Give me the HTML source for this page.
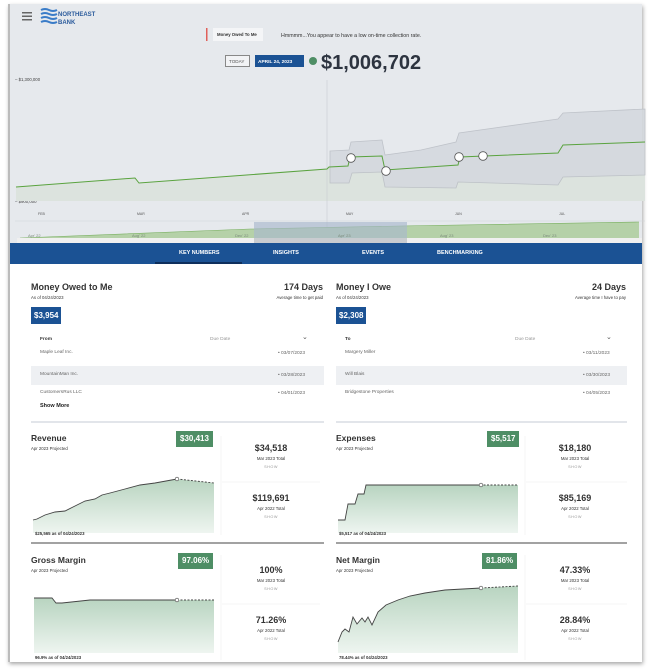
<!DOCTYPE html>
<html><head><meta charset="utf-8"><style>
*{margin:0;padding:0;box-sizing:border-box}
body{width:649px;height:671px;background:#fff;font-family:"Liberation Sans",sans-serif;position:relative;overflow:hidden;color:#333}
.a{position:absolute;white-space:nowrap}
.frame{position:absolute;left:8px;top:4px;width:634px;height:658px;background:#fff;box-shadow:1px 2px 4px rgba(0,0,0,.35);border-left:2px solid #bbb}
.top{position:absolute;left:10px;top:4px;width:632px;height:240px;background:#e6e9ed}
.nav{position:absolute;left:10px;top:243px;width:632px;height:21px;background:#1b5294}
.tab{position:absolute;top:250px;font-size:5.5px;font-weight:bold;color:#fff}
.h{font-size:9px;font-weight:bold;color:#333}
.s{font-size:4.3px;color:#333}
.blue{background:#1b5294;color:#fff;font-weight:bold;font-size:8px;padding:4px 3px;position:absolute}
.gbox{background:#4e8e65;color:#fff;font-weight:bold;font-size:8px;position:absolute;height:16px;line-height:16px;padding:0 4px}
.row{font-size:4.8px;color:#666}
.val{font-size:9px;font-weight:bold;color:#333;text-align:center;width:100px}
.sub{font-size:4.3px;color:#333;text-align:center;width:100px}
.show{font-size:3.8px;color:#999;text-align:center;width:100px;letter-spacing:.5px}
.ct{font-size:8.5px}
</style></head><body>
<div class="frame"></div>
<div class="top"></div>
<svg class="a" style="left:0;top:0" width="649" height="244" viewBox="0 0 649 244">
 <g fill="#666"><rect x="22" y="12" width="10" height="1.5"/><rect x="22" y="15.5" width="10" height="1.5"/><rect x="22" y="19" width="10" height="1.5"/></g>
 <g fill="none" stroke="#3a7cc8" stroke-width="2"><path d="M41 10q4-2 8 0t8 0"/><path d="M41 14q4-2 8 0t8 0"/><path d="M41 18q4-2 8 0t8 0"/><path d="M41 22q4-2 8 0t8 0"/></g>
 <text x="58" y="16" font-size="6" font-weight="bold" fill="#2b5b9c" font-family="Liberation Sans">NORTHEAST</text>
 <text x="58" y="24" font-size="6" font-weight="bold" fill="#2b5b9c" font-family="Liberation Sans">BANK</text>
 <rect x="206" y="28" width="1.5" height="13" fill="#e0605a"/>
 <rect x="213" y="28" width="50" height="13" fill="#f4f5f7"/>
 <text x="217" y="36" font-size="4.3" font-weight="bold" fill="#333" font-family="Liberation Sans">Money Owed To Me</text>
 <text x="281" y="37" font-size="5.3" fill="#333" font-family="Liberation Sans">Hmmmm...You appear to have a low on-time collection rate.</text>
 <rect x="225.5" y="55.5" width="24" height="11" fill="#f2f3f5" stroke="#888"/>
 <text x="229" y="63" font-size="4.6" fill="#555" font-family="Liberation Sans">TODAY</text>
 <rect x="255" y="55" width="49" height="12" fill="#1b5294"/>
 <text x="258" y="63" font-size="4.8" font-weight="bold" fill="#fff" font-family="Liberation Sans">APRIL 24, 2023</text>
 <circle cx="313" cy="61" r="4" fill="#4e8e65"/>
 <text x="321" y="69" font-size="20" font-weight="bold" fill="#2d3440" font-family="Liberation Sans">$1,006,702</text>
 <text x="15" y="81" font-size="4.3" fill="#444" font-family="Liberation Sans">–  $1,300,000</text>
 <text x="15" y="203" font-size="4.3" fill="#444" font-family="Liberation Sans">–  $900,000</text>
 <path d="M16 187L135 178L139 183L327 169L329 167L348 166L350 157L382 156L385 170L458 165L460 157L558 153L563 145L645 142L645 201L16 201Z" fill="#dce3de"/>
 <path d="M330 151L349 150L351 142L382 140L385 155L421 150L456 142L459 133L558 119L563 113L645 109L645 175L563 177L558 185L458 182L456 188L385 187L382 172L352 173L349 183L330 183Z" fill="#d4d8de" stroke="#b8bcc3" stroke-width=".8" opacity=".85"/>
 <line x1="327" y1="80" x2="327" y2="243" stroke="#c8ccd2" stroke-width=".6"/>
 <path d="M16 187L135 178L139 183L327 169L329 167L348 166L350 157L382 156L385 170L458 165L460 157L558 153L563 145L645 142" fill="none" stroke="#5aa33f" stroke-width="1"/>
 <g fill="#fff" stroke="#555" stroke-width=".8"><circle cx="351" cy="158" r="4.3"/><circle cx="386" cy="171" r="4.3"/><circle cx="459" cy="157" r="4.3"/><circle cx="483" cy="156" r="4.3"/></g>
 <g font-size="3.5" fill="#555" font-family="Liberation Sans"><text x="38" y="215">FEB</text><text x="137" y="215">MAR</text><text x="242" y="215">APR</text><text x="346" y="215">MAY</text><text x="455" y="215">JUN</text><text x="559" y="215">JUL</text></g>
 <line x1="15" y1="221" x2="645" y2="221" stroke="#d0d3d8" stroke-width=".5"/>
 <path d="M20 238L250 229L400 226L639 222L639 238Z" fill="#b5d1a8"/>
 <path d="M20 238L250 229L400 226L639 222" fill="none" stroke="#79b060" stroke-width=".6"/>
 <rect x="254" y="222" width="153" height="22" fill="#a9b8cc" opacity=".65"/>
 <g font-size="4" fill="#7a8a7a" font-family="Liberation Sans"><text x="28" y="237">Apr' 22</text><text x="132" y="237">Aug' 22</text><text x="235" y="237">Dec' 22</text><text x="338" y="237">Apr' 23</text><text x="440" y="237">Aug' 23</text><text x="543" y="237">Dec' 23</text></g>
 <rect x="17" y="238" width="625" height="5" fill="#f0f0f0"/>
 <rect x="254" y="238" width="153" height="5" fill="#c9ccd0"/>
</svg>
<div class="nav"></div>
<div class="a" style="left:155px;top:262px;width:87px;height:2px;background:#0e2f5c"></div>
<div class="tab a" style="left:179px">KEY NUMBERS</div>
<div class="tab a" style="left:273px">INSIGHTS</div>
<div class="tab a" style="left:362px">EVENTS</div>
<div class="tab a" style="left:437px">BENCHMARKING</div>

<div class="a h" style="left:31px;top:282px">Money Owed to Me</div>
<div class="a h" style="left:224px;top:282px;width:99px;text-align:right">174 Days</div>
<div class="a s" style="left:31px;top:295px">As of 04/24/2023</div>
<div class="a s" style="left:223px;top:295px;width:100px;text-align:right">Average time to get paid</div>
<div class="blue" style="left:31px;top:307px">$3,954</div>
<div class="a row" style="left:40px;top:337px;color:#333;font-weight:bold">From</div>
<div class="a row" style="left:210px;top:337px;color:#999">Due Date</div>
<div class="a" style="left:302px;top:333px;font-size:7px;color:#555">⌄</div>
<div class="a" style="left:31px;top:366px;width:293px;height:19px;background:#eef0f3"></div>
<div class="a row" style="left:40px;top:350px">Maple Leaf Inc.</div><div class="a row" style="left:278px;top:351px">• 03/07/2023</div>
<div class="a row" style="left:40px;top:372px">MountainMan Inc.</div><div class="a row" style="left:278px;top:373px">• 03/28/2023</div>
<div class="a row" style="left:40px;top:390px">CustomersRus LLC</div><div class="a row" style="left:278px;top:391px">• 04/01/2023</div>
<div class="a" style="left:40px;top:403px;font-size:5.5px;font-weight:bold;color:#222">Show More</div>

<div class="a h" style="left:336px;top:282px">Money I Owe</div>
<div class="a h" style="left:527px;top:282px;width:99px;text-align:right">24 Days</div>
<div class="a s" style="left:336px;top:295px">As of 04/24/2023</div>
<div class="a s" style="left:526px;top:295px;width:100px;text-align:right">Average time I have to pay</div>
<div class="blue" style="left:336px;top:307px">$2,308</div>
<div class="a row" style="left:345px;top:337px;color:#333;font-weight:bold">To</div>
<div class="a row" style="left:515px;top:337px;color:#999">Due Date</div>
<div class="a" style="left:606px;top:333px;font-size:7px;color:#555">⌄</div>
<div class="a" style="left:336px;top:366px;width:291px;height:19px;background:#eef0f3"></div>
<div class="a row" style="left:345px;top:350px">Margery Miller</div><div class="a row" style="left:583px;top:351px">• 03/11/2023</div>
<div class="a row" style="left:345px;top:372px">Will Blais</div><div class="a row" style="left:583px;top:373px">• 03/30/2023</div>
<div class="a row" style="left:345px;top:390px">Bridgestone Properties</div><div class="a row" style="left:583px;top:391px">• 04/05/2023</div>
<div class="a" style="left:31px;top:421px;width:293px;height:1.5px;background:#e2e5ea"></div>
<div class="a" style="left:336px;top:421px;width:291px;height:1.5px;background:#e2e5ea"></div>

<svg class="a" style="left:0;top:420px" width="649" height="251" viewBox="0 420 649 251">
 <g stroke="#eee" stroke-width=".6"><line x1="221" y1="436" x2="221" y2="535"/><line x1="525" y1="436" x2="525" y2="535"/><line x1="221" y1="555" x2="221" y2="660"/><line x1="525" y1="555" x2="525" y2="660"/>
 <line x1="222" y1="482" x2="320" y2="482"/><line x1="526" y1="482" x2="627" y2="482"/><line x1="222" y1="604" x2="320" y2="604"/><line x1="526" y1="604" x2="627" y2="604"/></g>
 <line x1="31" y1="543" x2="324" y2="543" stroke="#444" stroke-width="1"/>
 <line x1="336" y1="543" x2="627" y2="543" stroke="#444" stroke-width="1"/>
 <defs><linearGradient id="g" x1="0" y1="0" x2="0" y2="1"><stop offset="0" stop-color="#b8d4c0"/><stop offset="1" stop-color="#eef5f0"/></linearGradient></defs>
 <path d="M33 520L37 519L45 515L55 512L65 511L75 506L85 501L95 499L102 495L110 493L125 489L140 485L155 483L177 479L214 483L214 533L33 533Z" fill="url(#g)"/>
 <path d="M33 520L37 519L45 515L55 512L65 511L75 506L85 501L95 499L102 495L110 493L125 489L140 485L155 483L177 479" fill="none" stroke="#444" stroke-width=".9"/>
 <path d="M177 479L214 483" fill="none" stroke="#444" stroke-width=".9" stroke-dasharray="2 1.5"/>
 <circle cx="177" cy="479" r="1.8" fill="#fff" stroke="#444" stroke-width=".6"/>
 <path d="M338 520L345 520L348 504L355 504L358 494L364 494L366 485L480 485L518 485L518 533L338 533Z" fill="url(#g)"/>
 <path d="M338 520L345 520L348 504L355 504L358 494L364 494L366 485L480 485" fill="none" stroke="#444" stroke-width=".9"/>
 <path d="M480 485L518 485" stroke="#444" stroke-width=".9" stroke-dasharray="2 1.5"/>
 <circle cx="481" cy="485" r="1.8" fill="#fff" stroke="#444" stroke-width=".6"/>
 <path d="M34 598L52 598L56 603L62 603L90 600L177 600L214 600L214 653L34 653Z" fill="url(#g)"/>
 <path d="M34 598L52 598L56 603L62 603L90 600L177 600" fill="none" stroke="#444" stroke-width=".9"/>
 <path d="M177 600L214 600" stroke="#444" stroke-width=".9" stroke-dasharray="2 1.5"/>
 <circle cx="177" cy="600" r="1.8" fill="#fff" stroke="#444" stroke-width=".6"/>
 <path d="M338 642L342 632L345 629L349 632L353 617L357 624L362 618L365 622L368 617L372 625L378 612L386 605L398 600L410 596L425 593L445 590L481 588L518 586L518 653L338 653Z" fill="url(#g)"/>
 <path d="M338 642L342 632L345 629L349 632L353 617L357 624L362 618L365 622L368 617L372 625L378 612L386 605L398 600L410 596L425 593L445 590L481 588" fill="none" stroke="#444" stroke-width=".9"/>
 <path d="M481 588L518 586" stroke="#444" stroke-width=".9" stroke-dasharray="2 1.5"/>
 <circle cx="481" cy="588" r="1.8" fill="#fff" stroke="#444" stroke-width=".6"/>
</svg>

<div class="a h ct" style="left:31px;top:433px">Revenue</div>
<div class="a s" style="left:31px;top:446px">Apr 2023 Projected</div>
<div class="gbox" style="left:176px;top:431px">$30,413</div>
<div class="a val" style="left:221px;top:443px">$34,518</div>
<div class="a sub" style="left:221px;top:456px">Mar 2023 Total</div>
<div class="a show" style="left:221px;top:465px">SHOW</div>
<div class="a val" style="left:221px;top:493px">$119,691</div>
<div class="a sub" style="left:221px;top:506px">Apr 2022 Total</div>
<div class="a show" style="left:221px;top:515px">SHOW</div>
<div class="a s" style="left:35px;top:531px;font-weight:bold">$25,565 as of 04/24/2023</div>

<div class="a h ct" style="left:336px;top:433px">Expenses</div>
<div class="a s" style="left:336px;top:446px">Apr 2023 Projected</div>
<div class="gbox" style="left:487px;top:431px">$5,517</div>
<div class="a val" style="left:525px;top:443px">$18,180</div>
<div class="a sub" style="left:525px;top:456px">Mar 2023 Total</div>
<div class="a show" style="left:525px;top:465px">SHOW</div>
<div class="a val" style="left:525px;top:493px">$85,169</div>
<div class="a sub" style="left:525px;top:506px">Apr 2022 Total</div>
<div class="a show" style="left:525px;top:515px">SHOW</div>
<div class="a s" style="left:339px;top:531px;font-weight:bold">$5,517 as of 04/24/2023</div>

<div class="a h ct" style="left:31px;top:555px">Gross Margin</div>
<div class="a s" style="left:31px;top:568px">Apr 2023 Projected</div>
<div class="gbox" style="left:178px;top:553px">97.06%</div>
<div class="a val" style="left:221px;top:565px">100%</div>
<div class="a sub" style="left:221px;top:578px">Mar 2023 Total</div>
<div class="a show" style="left:221px;top:587px">SHOW</div>
<div class="a val" style="left:221px;top:615px">71.26%</div>
<div class="a sub" style="left:221px;top:628px">Apr 2022 Total</div>
<div class="a show" style="left:221px;top:637px">SHOW</div>
<div class="a s" style="left:35px;top:655px;font-weight:bold">96.9% as of 04/24/2023</div>

<div class="a h ct" style="left:336px;top:555px">Net Margin</div>
<div class="a s" style="left:336px;top:568px">Apr 2023 Projected</div>
<div class="gbox" style="left:482px;top:553px">81.86%</div>
<div class="a val" style="left:525px;top:565px">47.33%</div>
<div class="a sub" style="left:525px;top:578px">Mar 2023 Total</div>
<div class="a show" style="left:525px;top:587px">SHOW</div>
<div class="a val" style="left:525px;top:615px">28.84%</div>
<div class="a sub" style="left:525px;top:628px">Apr 2022 Total</div>
<div class="a show" style="left:525px;top:637px">SHOW</div>
<div class="a s" style="left:339px;top:655px;font-weight:bold">78.44% as of 04/24/2023</div>
</body></html>
